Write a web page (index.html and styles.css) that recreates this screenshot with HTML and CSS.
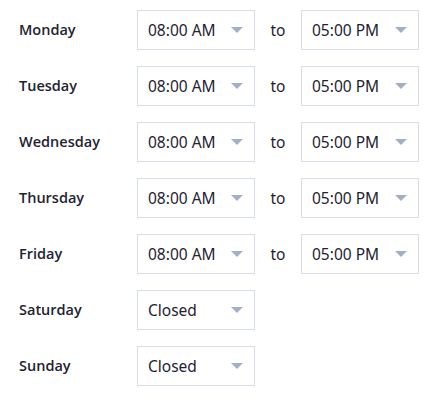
FILE: index.html
```html
<!DOCTYPE html>
<html lang="en">
<head>
    <meta charset="UTF-8">
    <title>Opening Hours</title>
    <link rel="stylesheet" href="styles.css">
</head>
<body>
    <div class="hours">
        <div class="row">
            <span class="day">Monday</span>
            <div class="select"><span>08:00 AM</span><i class="caret"></i></div>
            <span class="to">to</span>
            <div class="select"><span>05:00 PM</span><i class="caret"></i></div>
        </div>
        <div class="row">
            <span class="day">Tuesday</span>
            <div class="select"><span>08:00 AM</span><i class="caret"></i></div>
            <span class="to">to</span>
            <div class="select"><span>05:00 PM</span><i class="caret"></i></div>
        </div>
        <div class="row">
            <span class="day">Wednesday</span>
            <div class="select"><span>08:00 AM</span><i class="caret"></i></div>
            <span class="to">to</span>
            <div class="select"><span>05:00 PM</span><i class="caret"></i></div>
        </div>
        <div class="row">
            <span class="day">Thursday</span>
            <div class="select"><span>08:00 AM</span><i class="caret"></i></div>
            <span class="to">to</span>
            <div class="select"><span>05:00 PM</span><i class="caret"></i></div>
        </div>
        <div class="row">
            <span class="day">Friday</span>
            <div class="select"><span>08:00 AM</span><i class="caret"></i></div>
            <span class="to">to</span>
            <div class="select"><span>05:00 PM</span><i class="caret"></i></div>
        </div>
        <div class="row">
            <span class="day">Saturday</span>
            <div class="select"><span>Closed</span><i class="caret"></i></div>
        </div>
        <div class="row">
            <span class="day">Sunday</span>
            <div class="select"><span>Closed</span><i class="caret"></i></div>
        </div>
    </div>
</body>
</html>
```
FILE: styles.css
```css
body {
    margin: 0;
    background: #fff;
    color: #1f2330;
    font-family: "Noto Sans", sans-serif;
}

.hours {
    padding: 10px 19px;
    display: flex;
    flex-direction: column;
    gap: 16px;
}

.row {
    display: flex;
    align-items: center;
    height: 40px;
}

.day {
    width: 118px;
    font-family: "Open Sans", sans-serif;
    font-weight: 600;
    font-size: 14.5px;
    margin-top: -2px;
}

.select {
    box-sizing: border-box;
    width: 118px;
    height: 40px;
    border: 1px solid #d6dee8;
    padding: 0 10px;
    display: flex;
    align-items: center;
    justify-content: space-between;
    font-size: 15.5px;
}

.caret {
    width: 0;
    height: 0;
    border-left: 6px solid transparent;
    border-right: 6px solid transparent;
    border-top: 6px solid #a3b0c4;
    margin-right: 1px;
}

.to {
    width: 46px;
    text-align: center;
    font-size: 15.5px;
}
```
